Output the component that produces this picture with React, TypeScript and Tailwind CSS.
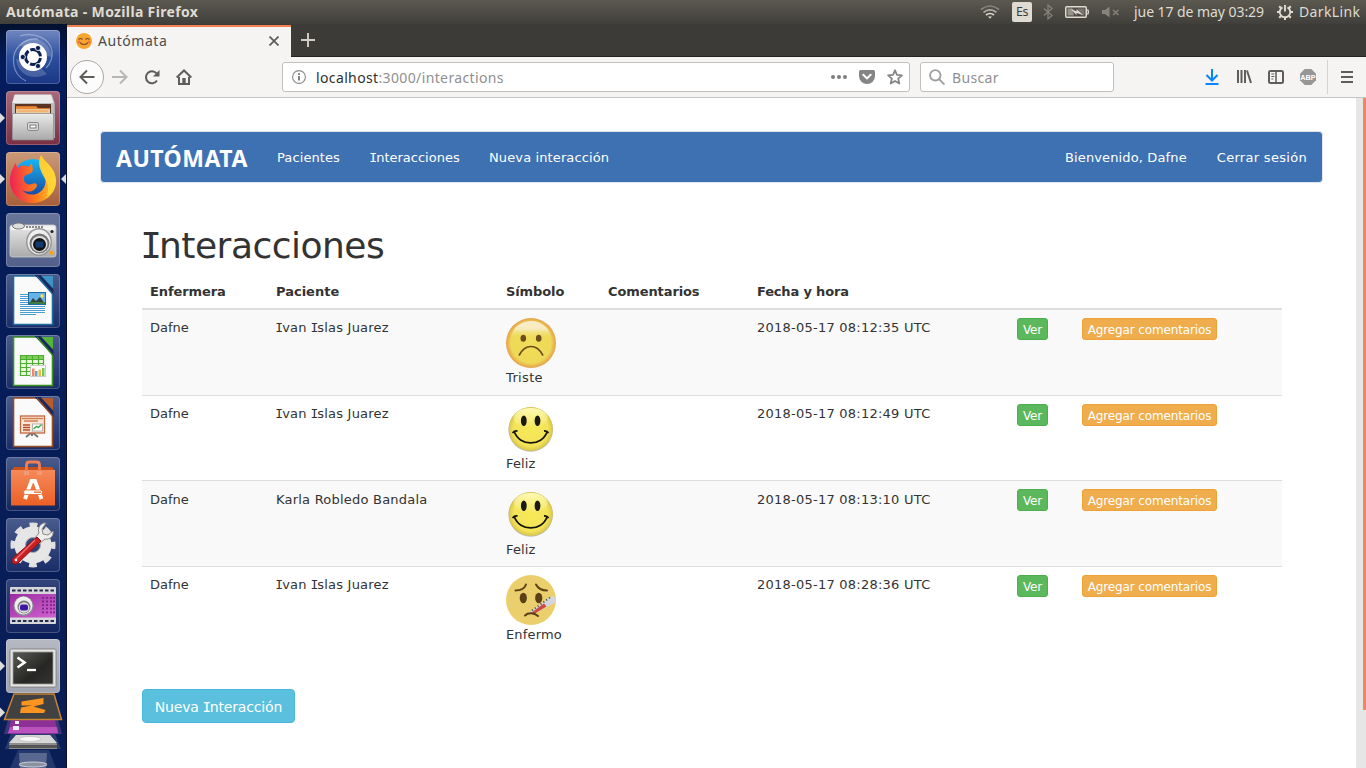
import React from "react";

const UI = "font-['Noto_Sans',sans-serif]";

/* Capital I is drawn with serifs, as in Verdana. */
function V({ children }: { children: string }) {
  return (
    <>
      {children.split(/(I)/).map((p, i) =>
        p === "I" ? (
          <span key={i} className="-ml-[0.05em] font-['DejaVu_Sans_Mono',monospace] tracking-[-0.08em]">I</span>
        ) : (
          p
        )
      )}
    </>
  );
}

/* ---------- Launcher ---------- */

function Doc({ edge, fold, children }: { edge: string; fold: string; children: React.ReactNode }) {
  return (
    <>
      <path d="M7.5 2h25L46.500 18v32.500h-39z" fill="#fafafa" stroke={edge} strokeWidth="1.600" />
      <path d="M34 2h13v13.500z" fill={fold} />
      <path d="M28.500 1h6L47.500 15v6z" fill="#1a2a5e" />
      <path d="M31 2L46.500 20" stroke={edge} strokeWidth="1.200" />
      {children}
    </>
  );
}

const icons: { name: string; tile: string; art: React.ReactNode; left?: boolean; right?: boolean }[] = [
  {
    name: "dash",
    tile: "bg-linear-to-b from-[#7287bf] via-[#2d4f9e] to-[#1b3785]",
    art: (
      <>
        <g fill="none" stroke="#c6d3ef" strokeWidth="1.200" opacity=".5">
          <path d="M20 51C5 44 4 24 14 15q8-7 18-6" />
          <path d="M14 6c14-4 30 2 32 15 1 8-2 13-6 17" />
        </g>
        <path d="M14 15C22 3 44 8 46 27l-19-4zM10 29c2 17 18 22 31 15L27 31z" fill="#fff" opacity=".18" />
        <circle cx="27" cy="27" r="14" fill="#fff" />
        <circle cx="27" cy="27" r="7.500" fill="none" stroke="#0c1f52" strokeWidth="3" strokeDasharray="13.700 2" strokeDashoffset="-1" />
        <g fill="#0c1f52" stroke="#fff" strokeWidth=".8">
          <circle cx="16.800" cy="27" r="2.600" /><circle cx="32" cy="18" r="2.600" /><circle cx="32" cy="36" r="2.600" />
        </g>
      </>
    ),
  },
  {
    name: "files",
    left: true,
    tile: "bg-linear-to-b from-[#a86a7a] to-[#7c2f43]",
    art: (
      <>
        <path d="M8 4h38l3 9v34H6V13z" fill="#aaa" />
        <path d="M9 3.500h36l3 9H6z" fill="#ececec" />
        <path d="M6 12h42v10H6z" fill="#bdbdbd" /><path d="M9 13h36v10H9z" fill="#5a3423" />
        <path d="M10 15h20l2 2h12v6H10z" fill="#d97328" /><path d="M10 18h34v5H10z" fill="#ecc99b" />
        <path d="M10 17h21M12 20h30" stroke="#f4a04e" />
        <path d="M6.500 22.500h41V49h-41z" fill="url(#silver)" stroke="#8a8a8a" strokeWidth=".7" />
        <rect x="21.500" y="31.500" width="11" height="8" rx="1.500" fill="#ddd" stroke="#888" />
        <rect x="24" y="34" width="6" height="3" fill="#fff" stroke="#777" />
      </>
    ),
  },
  {
    name: "firefox",
    left: true,
    right: true,
    tile: "bg-linear-to-b from-[#c99a78] to-[#a85f3a]",
    art: (
      <>
        <circle cx="27" cy="27" r="20" fill="url(#globe)" />
        <path d="M35 3c2 5 9 9 13 17 5 12 0 22-8 27-9 6-21 5-28-1C5 40 2 31 5 21c1-4 3-6 4-10l3 5c3-3 7-3 10-1l4-4c0 5 2 6 0 9-1 2-7 2-8 5-1 4 2 9 8 7 4-2 7 1 3 5-4 4-10 3-13 1 7 8 20 5 23-5 2-7-2-11-4-16-2-6-2-10 0-14z" fill="url(#fox)" />
        <path d="M35 3c2 5 9 9 13 17 5 13-1 22-8 26 3-7 3-13-1-19-5-9-8-15-4-24z" fill="#ffd83b" opacity=".8" />
      </>
    ),
  },
  {
    name: "camera",
    tile: "bg-linear-to-b from-[#69769b] to-[#52608b]",
    art: (
      <>
        <rect x="4" y="12" width="46" height="32" rx="2.500" fill="url(#silver)" stroke="#cfcfcf" strokeWidth=".8" />
        <path d="M4.500 13h44v4h-44z" fill="#f3f3f3" />
        <ellipse cx="12.500" cy="13" rx="6" ry="3" fill="#ddd" stroke="#777" />
        <path d="M20 14h17" stroke="#888" strokeWidth="2" strokeDasharray="2 1" />
        <ellipse cx="33" cy="29" rx="13" ry="14" fill="#999" /><ellipse cx="33" cy="29" rx="11.500" ry="12.500" fill="#eee" />
        <circle cx="33.500" cy="30.500" r="10" fill="#777" /><circle cx="33.500" cy="31" r="8" fill="#e0e0e0" />
        <circle cx="33.500" cy="31.500" r="6.500" fill="#111" /><rect x="29.500" y="28.500" width="8" height="6" rx="1" fill="#133a70" />
        <circle cx="46" cy="18.500" r="1.600" fill="#222" /><rect x="43.500" y="38" width="3.500" height="3.500" fill="#f5a020" />
      </>
    ),
  },
  {
    name: "writer",
    tile: "bg-linear-to-b from-[#4a5b8c] to-[#1b2d68]",
    art: (
      <Doc edge="#1f6ba0" fold="#3c93c6">
        <g stroke="#4d9fd0" strokeWidth="1"><path d="M14 20.500h8M14 22.500h8M14 24.500h8M14 26.500h8M14 28.500h8M14 30.500h8M14 32.500h25M14 34.500h25M14 36.500h25M14 38.500h25M14 40.500h16" /></g>
        <rect x="22.500" y="18.500" width="17" height="12" fill="#63b4e8" stroke="#1f6ba0" />
        <path d="M23 30l4-6 3 3 4-4 5 7z" fill="#35423a" /><path d="M23 28h16v2H23z" fill="#3c7d42" /><circle cx="36" cy="22" r="1.700" fill="#ffe14d" />
      </Doc>
    ),
  },
  {
    name: "calc",
    tile: "bg-linear-to-b from-[#4a5b8c] to-[#1b2d68]",
    art: (
      <Doc edge="#38911f" fold="#55b53b">
        <rect x="14" y="20" width="24" height="20" fill="#eaf8e2" />
        <path d="M14 20h24v4H14z" fill="#7fce5d" />
        <path d="M14 20.500h24M14 24.500h24M14 28.500h24M14 32.500h24M14 36.500h24M14 40.500h24M14.500 20v20M20.500 20v20M26.500 20v20M32.500 20v20M37.500 20v20" stroke="#4bae2c" strokeWidth="1.200" />
        <rect x="24.500" y="30.500" width="15" height="11" fill="#fff" stroke="#ccc" />
        <path d="M26 33.500h2.500V41H26z" fill="#ee8a6a" /><path d="M29 36h2.500v5H29z" fill="#5fa6dc" /><path d="M32.500 34.500H35V41h-2.500z" fill="#f2b83c" /><path d="M36 33h2.500v8H36z" fill="#76c65b" />
      </Doc>
    ),
  },
  {
    name: "impress",
    tile: "bg-linear-to-b from-[#4a5b8c] to-[#1b2d68]",
    art: (
      <Doc edge="#9c4a20" fold="#b55d2e">
        <path d="M20 41l6-5 6 5M26 36v4" stroke="#777" strokeWidth="2" fill="none" />
        <rect x="14.500" y="20" width="24" height="17" fill="#fbe6d7" stroke="#c3683e" strokeWidth="1.300" />
        <path d="M16 22.500h21M18 25h14" stroke="#d08050" strokeWidth="1.300" />
        <path d="M17 29h7M17 31.500h7M17 34h7" stroke="#b94f26" strokeWidth="1.300" />
        <rect x="26.500" y="28" width="10" height="7" fill="#fff" stroke="#999" strokeWidth=".7" /><path d="M27.500 33l3-2.500 2 1 3-3" stroke="#39a83c" strokeWidth="1.400" fill="none" />
      </Doc>
    ),
  },
  {
    name: "software",
    tile: "bg-linear-to-b from-[#4a5b8c] to-[#16265d]",
    art: (
      <>
        <path d="M5 14l3-4h38l3 4z" fill="#c9501b" />
        <path d="M5 13h44v35.500H5z" fill="url(#bag)" />
        <path d="M20.500 17V8q0-3 3-3h7q3 0 3 3v9" fill="none" stroke="#ef7f55" strokeWidth="2.800" />
        <path d="M18 14h5v4h-5zM31 14h5v4h-5z" fill="#f29a78" />
        <path d="M19 42l6.500-18h3.500l6.500 18" fill="none" stroke="#fff" strokeWidth="3.800" />
        <rect x="17.500" y="33" width="19" height="4.500" rx="2" fill="#fff" stroke="#e46527" strokeWidth=".8" /><path d="M28 35.200h7" stroke="#e46527" strokeWidth="1.300" />
      </>
    ),
  },
  {
    name: "settings",
    tile: "bg-linear-to-b from-[#4a5b8c] to-[#1b2d68]",
    art: (
      <>
        <circle cx="27" cy="27" r="20" fill="none" stroke="#e0e0e0" strokeWidth="5" strokeDasharray="7.850 7.850" strokeDashoffset="4" />
        <circle cx="27" cy="27" r="13" fill="none" stroke="#e6e6e6" strokeWidth="11" />
        <circle cx="27" cy="27" r="7.500" fill="none" stroke="#aaa" />
        <path d="M40 5c-5-1-9 5-7 10l-5 6 5 5 6-5c5 1 9-3 8-8l-5 4-5-1-1-5z" fill="#eee" stroke="#888" />
        <path d="M31 19l4 4-23 22c-4 3-8-1-5-5z" fill="#c81f25" stroke="#8b1015" /><path d="M29 22L9 42" stroke="#f07070" strokeWidth="1.500" /><circle cx="10" cy="42" r="1.300" fill="#fff" />
      </>
    ),
  },
  {
    name: "screencast",
    tile: "bg-linear-to-b from-[#33447a] to-[#142560]",
    art: (
      <>
        <rect x="4" y="8" width="46" height="37" rx="1" fill="#d7d7da" />
        <path d="M6 11.500h42M6 42h42" stroke="#222c50" strokeWidth="2.200" strokeDasharray="3.500 2" />
        <path d="M4 15h46v23.500H4z" fill="url(#purple)" />
        <path d="M37 18v18M41 18v18M45 18v18M48 18v18" stroke="#6f1d7a" strokeWidth="1.600" strokeDasharray="1.800 1.800" />
        <circle cx="17.500" cy="27" r="10" fill="#8d8d95" /><circle cx="17.500" cy="26.500" r="9" fill="#eee" /><circle cx="18" cy="28" r="6.500" fill="#777" /><circle cx="18" cy="28.500" r="5.300" fill="#ddd" /><rect x="14" y="25.500" width="8" height="6" rx="2" fill="#3c16a0" />
      </>
    ),
  },
  {
    name: "terminal",
    left: true,
    tile: "bg-linear-to-b from-[#b6b8c2] to-[#a0a3b0]",
    art: (
      <>
        <rect x="4" y="10" width="46" height="38" rx="1.500" fill="#e4e4e0" stroke="#777" strokeWidth=".8" />
        <rect x="7" y="13" width="40" height="32" fill="url(#term)" stroke="#999" strokeWidth=".8" />
        <path d="M11.500 18.500l7 5-7 5" fill="none" stroke="#fff" strokeWidth="2.600" /><path d="M21 31h9" stroke="#fff" strokeWidth="2.300" />
      </>
    ),
  },
];

function Launcher() {
  return (
    <aside className="flex w-[67px] shrink-0 flex-col gap-[7px] border-r border-[#0a0f2a] bg-linear-to-b from-[#03102f] via-[#041c5c] via-5% to-[#0a1e56] pt-1.5 pl-1.5">
      <svg className="absolute size-0">
        <defs>
          <linearGradient id="silver" x2="0" y2="1"><stop stopColor="#e9e9e9" /><stop offset="1" stopColor="#aaa" /></linearGradient>
          <linearGradient id="globe" x2="0" y2="1"><stop stopColor="#16b5f3" /><stop offset="1" stopColor="#1a3f9c" /></linearGradient>
          <linearGradient id="fox" x1="0" y1=".4" x2="1" y2=".3"><stop stopColor="#ee2455" /><stop offset=".5" stopColor="#ff7a1b" /><stop offset="1" stopColor="#ffd42e" /></linearGradient>
          <linearGradient id="bag" x2="0" y2="1"><stop stopColor="#f58a5a" /><stop offset="1" stopColor="#ec6025" /></linearGradient>
          <linearGradient id="purple" x2="1" y2="1"><stop stopColor="#9d2ba0" /><stop offset="1" stopColor="#cf63cf" /></linearGradient>
          <linearGradient id="term" x2="1" y2="1"><stop stopColor="#5a5a55" /><stop offset=".6" stopColor="#262624" /><stop offset="1" stopColor="#353532" /></linearGradient>
        </defs>
      </svg>
      {icons.map((i) => (
        <div key={i.name} className={`relative size-[54px] shrink-0 rounded-[4px] shadow-[inset_0_0_0_1px_#ffffff35] last-of-type:-mt-px ${i.tile}`}>
          <svg viewBox="0 0 54 54" className="size-[54px]">{i.art}</svg>
          {i.left && <svg className="absolute top-[22px] -left-1.5 h-2.5 w-[5px]" viewBox="0 0 5 10"><path d="M0 0l5 5-5 5z" fill="#ddd" /></svg>}
          {i.right && <svg className="absolute top-[22px] -right-1.5 h-2.5 w-[5px]" viewBox="0 0 5 10"><path d="M5 0L0 5l5 5z" fill="#ddd" /></svg>}
        </div>
      ))}
      <svg className="-mt-[7px] -ml-1.5 h-[75px] w-[66px] shrink-0" viewBox="0 0 66 75">
        <path d="M18 57h31l7 18H10z" fill="#35497d" opacity=".6" />
        <path d="M19 60h28l-1 15H20z" fill="#8490ac" opacity=".55" />
        <ellipse cx="33" cy="71.500" rx="14" ry="2.500" fill="#8b929f" stroke="#ccd" />
        <path d="M12 38h42l7 18H5z" fill="#314476" opacity=".8" />
        <path d="M16 42h34l7 9v5H9v-5z" fill="#8c8c8c" /><path d="M16 42h34l7 8H9z" fill="#d6d6d6" /><ellipse cx="30" cy="46" rx="11" ry="2.500" fill="#f6f6f6" stroke="#bbb" strokeWidth=".7" /><path d="M9 52h48v3H9z" fill="#555" />
        <path d="M8 27h50l4 14H4z" fill="#4a3c85" opacity=".8" />
        <path d="M11 27h44l3 14H8z" fill="#8c2f96" /><path d="M10 34h47l1 6H8z" fill="#ba52bd" /><path d="M15 28h4v3h-4zM13 33h6v4h-6z" fill="#eee" />
        <path d="M14 1h40l7.500 25.500h-57z" fill="#414141" stroke="#c58432" strokeWidth="1.500" />
        <path d="M21.500 8.500L43.500 5v6l-10 2.500L45.500 17 44 20H20l1-5.500 11-2-10.500 0z" fill="#fb9420" />
        <path d="M0 14.500l5 5-5 5z" fill="#ddd" />
      </svg>
    </aside>
  );
}

/* ---------- Desktop panel ---------- */

function Panel() {
  return (
    <header className={`${UI} flex h-6 shrink-0 items-center bg-linear-to-b from-[#5b594f] to-[#413f3b] pl-1.5 text-[14px] text-[#dfdbd2]`}>
      <span className="grow pb-px text-[14px] font-bold tracking-[0.34px]">Autómata - Mozilla Firefox</span>
      <div className="flex items-center pr-[5px]">
        <svg className="h-4 w-5" viewBox="0 0 20 16" fill="none" strokeWidth="1.700">
          <path d="M1 5.500q9-7 18 0" stroke="#87847c" /><path d="M3.500 8.300q6.500-5 13 0" stroke="#b3afa7" /><path d="M6 11q4-3 8 0" stroke="#dfdbd2" /><path d="M8 12.500h4l-2 2.300z" fill="#dfdbd2" stroke="none" />
        </svg>
        <span className="ml-3 flex h-5 w-5 items-center justify-center rounded-[2px] bg-[#dfdbd2] text-[12.5px] tracking-[-0.5px] text-[#3c3b37]">Es</span>
        <svg className="ml-[11px] h-4 w-[10px]" viewBox="0 0 10 16"><path d="M1 4.500l8 7L5 15V1l4 3.500-8 7" fill="none" stroke="#87847c" strokeWidth="1.200" /></svg>
        <svg className="ml-[12px] h-3 w-[25px]" viewBox="0 0 25 12">
          <rect x=".75" y=".75" width="20.500" height="10.500" rx="1" fill="none" stroke="#dfdbd2" strokeWidth="1.500" /><path d="M22.500 3.500q1.800 2.500 0 5" stroke="#dfdbd2" fill="none" strokeWidth="1.300" />
          <path d="M2.500 2.500h5l1.500 7h-6.500z" fill="#96928a" /><path d="M13 2.500h6.500v7H16z" fill="#77746c" /><path d="M5.500 2.500l6 3V3l6.500 6-6.500-2v2.300z" fill="#dfdbd2" />
        </svg>
        <svg className="ml-3 h-3 w-[18px]" viewBox="0 0 18 12"><path d="M0 4h3l4.500-3.500v11L3 8H0z" fill="#87847c" /><path d="M11 4l5.500 5M16.500 4L11 9" stroke="#87847c" strokeWidth="1.400" /></svg>
        <span className="ml-[14px] w-[131px] pb-px whitespace-nowrap tracking-[-0.06px]">jue 17 de may 03:29</span>
        <svg className="ml-[12px] size-4" viewBox="0 0 16 16" fill="none" stroke="#dfdbd2">
          <path d="M5.500 3.300A5.300 5.300 0 1 0 10.500 3.300" strokeWidth="1.900" /><path d="M8 1v6.500" strokeWidth="1.900" />
          <path d="M2.200 2.200l2 2M13.800 2.200l-2 2M0 8h3M16 8h-3M2.200 13.800l2-2M13.800 13.800l-2-2M8 16v-3" strokeWidth="2" />
        </svg>
        <span className="ml-[6px] w-[62px] pb-px whitespace-nowrap tracking-[0.38px]">DarkLink</span>
      </div>
    </header>
  );
}

/* ---------- Browser chrome ---------- */

function Tabs() {
  return (
    <div className={`${UI} flex h-[33px] shrink-0 border-b border-[#252420] bg-[#3c3b37]`}>
      <div className="mt-px -mb-px flex w-[224px] items-center border-t-2 border-[#f08050] bg-[#f5f4f2] pb-[3px] pl-[9px] text-[14px] text-[#4c4c4c]">
        <svg className="size-4 bg-white" viewBox="0 0 16 16">
          <circle cx="8" cy="8" r="8" fill="#f8a531" /><path d="M2.500 6.500q2-2 4 0M9.500 6.500q2-2 4 0M4 9.500q4 4 8 0" fill="none" stroke="#7b4a22" strokeWidth="1.100" />
          <circle cx="3" cy="9" r="1.500" fill="#f27141" /><circle cx="13" cy="9" r="1.500" fill="#f27141" />
        </svg>
        <span className="ml-1.5 grow tracking-[0.55px]">Autómata</span>
        <svg className="mr-[12px] size-[10px]" viewBox="0 0 10 10"><path d="M.5.500l9 9M9.500.500l-9 9" stroke="#5a5a58" strokeWidth="1.700" /></svg>
      </div>
      <svg className="mt-[9px] ml-[10px] size-[14px]" viewBox="0 0 14 14"><path d="M7 0v14M0 7h14" stroke="#d3cfc8" strokeWidth="1.900" /></svg>
    </div>
  );
}

function Toolbar() {
  const s = { fill: "none", stroke: "#5d5d5b", strokeWidth: 2 } as const;
  return (
    <div className={`${UI} flex h-[41px] shrink-0 items-center border-b border-[#c6c4c2] bg-[#f5f4f2] pl-[3px] text-[14px]`}>
      <span className="flex size-[34px] items-center justify-center rounded-full border border-[#a9a8a6] bg-[#fcfcfc]">
        <svg className="size-4" viewBox="0 0 16 16" {...s}><path d="M15.500 8H1.500M8 1.500L1.500 8 8 14.500" /></svg>
      </span>
      <svg className="ml-2 size-4 opacity-40" viewBox="0 0 16 16" {...s}><path d="M0 8h14.500M8 1.500L14.500 8 8 14.500" /></svg>
      <svg className="ml-4 size-4" viewBox="0 0 16 16" {...s}><path d="M13 11.500A6 6 0 1 1 12.500 4.300" /><path d="M15.500 1v6.500H9z" fill="#5d5d5b" stroke="none" /></svg>
      <svg className="ml-4 size-4" viewBox="0 0 16 16" {...s}><path d="M.7 8.500L8 1.500l7.300 7M3 8v7h10V8" /><path d="M6.300 9h3.400v6H6.300z" fill="#5d5d5b" stroke="none" /></svg>
      <div className="ml-[90px] flex h-[30px] w-[628px] items-center rounded-[3px] border border-[#c2c0be] bg-white pl-[9px]">
        <svg className="size-[14px]" viewBox="0 0 14 14"><circle cx="7" cy="7" r="6.400" fill="none" stroke="#8a8a8a" strokeWidth="1.100" /><path d="M7 6v4.500M7 3.200v1.800" stroke="#777" strokeWidth="1.800" /></svg>
        <span className="ml-[10px] grow tracking-[0.37px] text-[#8f8f8f]"><span className="text-[#303030]">localhost</span>:3000/interactions</span>
        <svg className="h-4 w-4" viewBox="0 0 16 16" fill="#7d7d7d"><circle cx="2" cy="8" r="2" /><circle cx="8" cy="8" r="2" /><circle cx="14" cy="8" r="2" /></svg>
        <svg className="ml-3 h-4 w-4" viewBox="0 0 16 16"><path d="M1.500 1h13Q16 1 16 2.500V7A8 8 0 0 1 0 7V2.500Q0 1 1.500 1z" fill="#858585" /><path d="M4.300 5.800L8 9.400l3.700-3.600" fill="none" stroke="#fff" strokeWidth="2" strokeLinecap="round" /></svg>
        <svg className="mr-[6px] ml-3 h-4 w-4" viewBox="0 0 16 16"><path d="M8 1.300l2 4.500 4.900.5-3.700 3.300 1.100 4.900L8 12l-4.300 2.500 1.100-4.900L1.100 6.300 6 5.800z" fill="none" stroke="#858585" strokeWidth="1.800" strokeLinejoin="round" /></svg>
      </div>
      <div className="ml-[10px] flex h-[30px] w-[194px] items-center rounded-[3px] border border-[#c2c0be] bg-white pl-2">
        <svg className="size-4" viewBox="0 0 16 16" fill="none" stroke="#a0a0a0" strokeWidth="1.900"><circle cx="6.300" cy="6.300" r="5.200" /><path d="M10 10l5.500 5.500" /></svg>
        <span className="ml-[7px] tracking-[0.35px] text-[#8f8f8f]">Buscar</span>
      </div>
      <div className="ml-auto flex h-full items-center">
        <svg className="h-4 w-[14px]" viewBox="0 0 14 16" fill="none" stroke="#0a84ff" strokeWidth="2"><path d="M7 0v11M1.500 6L7 11.500 12.500 6M.5 15h13" /></svg>
        <svg className="ml-[17px] h-4 w-4" viewBox="0 0 16 16" {...s}><path d="M2 1v13M5.500 1v13M9 1v13M11 1.500l4 12.500" /></svg>
        <svg className="ml-[16px] h-4 w-4" viewBox="0 0 16 16" {...s}><rect x="1" y="2" width="14" height="12" rx="1.500" /><path d="M8 2v12" strokeWidth="1.500" /><path d="M3.300 5h3M3.300 7.500h3M3.300 10h2" strokeWidth="1" /></svg>
        <svg className="ml-4 h-4 w-4" viewBox="0 0 16 16"><path d="M4.700 0h6.600L16 4.700v6.600L11.300 16H4.700L0 11.300V4.700z" fill="#969696" /><text x="8" y="10.700" textAnchor="middle" fontFamily="Liberation Sans" fontWeight="700" fontSize="7.300" fill="#fff">ABP</text></svg>
        <span className="ml-[11px] h-[34px] w-px bg-[#d5d3d1]" />
        <svg className="mr-[13px] ml-[13px] h-3 w-3" viewBox="0 0 12 12"><path d="M0 1h12M0 6h12M0 11h12" stroke="#5d5d5b" strokeWidth="2" /></svg>
      </div>
    </div>
  );
}

/* ---------- Page ---------- */

function Sad() {
  return (
    <svg viewBox="0 0 50 50" className="size-[50px]">
      <defs>
        <radialGradient id="sad"><stop stopColor="#f0dd58" /><stop offset=".8" stopColor="#efd958" /><stop offset=".92" stopColor="#eab64f" /><stop offset="1" stopColor="#e3a04a" /></radialGradient>
        <linearGradient id="gloss" x2="0" y2="1"><stop stopColor="#f8edcd" /><stop offset=".5" stopColor="#f6ebbc" /><stop offset="1" stopColor="#f3e27b" stopOpacity="0" /></linearGradient>
      </defs>
      <circle cx="25" cy="25" r="25" fill="url(#sad)" />
      <path d="M4.500 19C8 8 16 3 25 3s17 5 20.500 16z" fill="url(#gloss)" />
      <g fill="#6d4c1c"><ellipse cx="17.300" cy="20.300" rx="2.800" ry="3.500" /><ellipse cx="32.700" cy="20.300" rx="2.800" ry="3.500" /></g>
      <path d="M13 37.500c6-12 18-12 24 0" fill="none" stroke="#6b4d1c" strokeWidth="1.700" />
    </svg>
  );
}

function Happy() {
  return (
    <svg viewBox="0 0 50 50" className="size-[50px]">
      <defs>
        <radialGradient id="happy" cx=".5" cy=".5" r=".52"><stop stopColor="#f6e957" /><stop offset=".75" stopColor="#f4e45a" /><stop offset="1" stopColor="#d3bf48" /></radialGradient>
        <linearGradient id="shine" x2="0" y2="1"><stop stopColor="#fffbb5" /><stop offset="1" stopColor="#fffbb5" stopOpacity="0" /></linearGradient>
      </defs>
      <circle cx="24.700" cy="25.500" r="22.300" fill="#bcbcb5" /><circle cx="24.700" cy="25" r="22" fill="url(#happy)" />
      <ellipse cx="24.700" cy="14" rx="17" ry="10" fill="url(#shine)" />
      <ellipse cx="17.800" cy="16.800" rx="2.900" ry="5.300" fill="#1c1a10" /><ellipse cx="31.500" cy="16.800" rx="2.900" ry="5.300" fill="#1c1a10" />
      <path d="M8.500 28c5 14.500 27.500 14.500 32.500 0M6.500 29q2-2.500 5-2M38 27q3-.5 4.500 2" fill="none" stroke="#17150a" strokeWidth="1.800" />
    </svg>
  );
}

function Sick() {
  return (
    <svg viewBox="0 0 50 50" className="size-[50px]">
      <circle cx="25" cy="25" r="25" fill="#ebcf6c" />
      <g fill="none" stroke="#604418" strokeWidth="2" strokeLinecap="round"><path d="M9.500 15.500c5 0 9-2 10.500-6M30 9.500c2 4 6 6 11 6" /></g>
      <g fill="#5b4016"><ellipse cx="17.300" cy="23" rx="3.600" ry="5.200" /><ellipse cx="32.700" cy="23" rx="3.600" ry="5.200" /></g>
      <path d="M23 38L45 21.500q3-1 4.500 1.500 1 3-.5 4.500L29 38.500l-6 1z" fill="#d3d6dc" />
      <path d="M25 38l13-9.500 2.500 3L29 38.500z" fill="#cb4a42" />
      <path d="M26 35.500L44 22.500" stroke="#555b66" strokeWidth="2" strokeDasharray="1.200 2.300" />
      <path d="M19 40.500c3-3 9-3 13 .5" fill="none" stroke="#5b4016" strokeWidth="2" strokeLinecap="round" />
    </svg>
  );
}

const rows = [
  { p: "Ivan Islas Juarez", s: "Triste", Face: Sad, t: "2018-05-17 08:12:35 UTC", cls: "h-[85px] bg-[#f9f9f9]", txt: "" },
  { p: "Ivan Islas Juarez", s: "Feliz", Face: Happy, t: "2018-05-17 08:12:49 UTC", cls: "h-[85px] border-t border-[#ddd]", txt: "" },
  { p: "Karla Robledo Bandala", s: "Feliz", Face: Happy, t: "2018-05-17 08:13:10 UTC", cls: "h-[86px] border-t border-[#ddd] bg-[#f9f9f9]", txt: "pt-px" },
  { p: "Ivan Islas Juarez", s: "Enfermo", Face: Sick, t: "2018-05-17 08:28:36 UTC", cls: "h-[86px] border-t border-[#ddd]", txt: "" },
];

const cols = "grid grid-cols-[126px_230px_102px_149px_260px_65px_208px] px-2";

function Page() {
  return (
    <main className="grow bg-white pt-[33px] pr-[33px] pl-[33px] font-['DejaVu_Sans',sans-serif] text-[13px] leading-5 text-[#333]">
      <nav className="flex h-[52px] items-center rounded-[4px] border border-[#e0e4ea] bg-[#3e71b2] px-[15px] text-white [&>span]:pt-[2px]">
        <span className="w-[161px] pb-px font-['Noto_Sans',sans-serif] text-[23px] font-bold tracking-[0.5px]">AUTÓMATA</span>
        <span className="w-[93px] tracking-[0.1px]">Pacientes</span>
        <span className="w-[119px]"><V>Interacciones</V></span>
        <span className="tracking-[0.12px]">Nueva interacción</span>
        <span className="ml-auto tracking-[0.13px]">Bienvenido, Dafne</span>
        <span className="ml-[30px] tracking-[0.3px]">Cerrar sesión</span>
      </nav>
      <section className="mt-[42px] ml-[42px] w-[1140px]">
        <h1 className="pt-px text-[36px] leading-10 tracking-[-0.5px]"><V>Interacciones</V></h1>
        <div className={`${cols} mt-[8px] h-[36px] border-b-2 border-[#ddd] pt-[8px] font-bold tracking-[-0.1px]`}>
          <span>Enfermera</span><span className="tracking-[0px]">Paciente</span><span>Símbolo</span><span>Comentarios</span><span className="tracking-[-0.17px]">Fecha y hora</span>
        </div>
        {rows.map(({ p, s, Face, t, cls, txt }, i) => (
          <div key={i} className={`${cols} pt-2 ${cls}`}>
            <span className={txt}>Dafne</span>
            <span className={`tracking-[0.22px] ${txt}`}><V>{p}</V></span>
            <div><Face /><div className={`${s === "Triste" ? "tracking-[0.35px]" : "tracking-[0.15px]"} ${txt}`}>{s}</div></div>
            <span />
            <span className={`tracking-[0.24px] ${txt}`}>{t}</span>
            <div><button className="block h-[22px] w-[31px] rounded-[3px] border border-[#4cae4c] bg-[#5cb85c] pt-px text-[12px] tracking-[-0.2px] text-white">Ver</button></div>
            <div><button className="block h-[22px] w-[135px] rounded-[3px] border border-[#eea236] bg-[#f0ad4e] pt-px text-[12px] tracking-[-0.13px] whitespace-nowrap text-white">Agregar comentarios</button></div>
          </div>
        ))}
        <button className="mt-[37px] h-[34px] w-[153px] rounded-[4px] border border-[#46b8da] bg-[#5bc0de] pt-px text-[14px] tracking-[-0.15px] whitespace-nowrap text-white"><V>Nueva Interacción</V></button>
      </section>
    </main>
  );
}

export default function App() {
  return (
    <div className="flex h-[768px] w-[1366px] flex-col overflow-hidden">
      <Panel />
      <div className="flex h-[744px]">
        <Launcher />
        <div className="flex grow flex-col">
          <Tabs />
          <Toolbar />
          <div className="flex grow">
            <Page />
            <div className="flex w-[10px] justify-end bg-[#e6e6e6]">
              <div className="h-[612px] w-[3px] bg-[#f0875f]" />
            </div>
          </div>
        </div>
      </div>
    </div>
  );
}
